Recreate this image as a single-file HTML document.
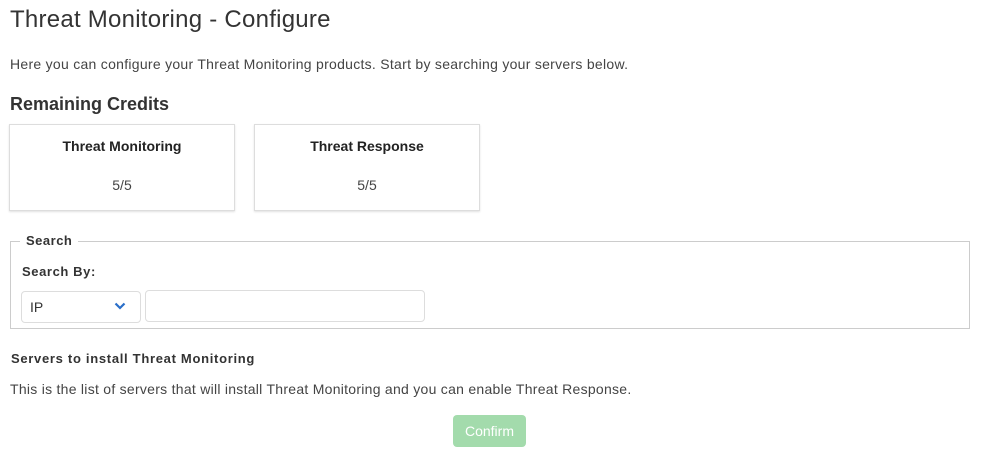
<!DOCTYPE html>
<html><head><style>
*{margin:0;padding:0;box-sizing:border-box}
body{width:1000px;height:458px;background:#fff;font-family:"Liberation Sans",sans-serif;color:#333;position:relative;overflow:hidden}
.a{position:absolute;white-space:nowrap}
.card{position:absolute;top:124px;width:226px;height:87px;border:1px solid #ddd;box-shadow:0 1px 2px rgba(0,0,0,.12);background:#fff}
.card .t{position:absolute;top:13px;left:0;right:0;text-align:center;font-weight:bold;font-size:14px;color:#222}
.card .v{position:absolute;top:52px;left:0;right:0;text-align:center;font-size:14px;color:#444}
</style></head><body>
<div class="a" style="left:10px;top:6px;font-size:24px;color:#333;letter-spacing:0.25px">Threat Monitoring - Configure</div>
<div class="a" style="left:10px;top:56px;font-size:14px;color:#444;letter-spacing:0.28px">Here you can configure your Threat Monitoring products. Start by searching your servers below.</div>
<div class="a" style="left:10px;top:94px;font-size:18px;font-weight:bold;color:#333">Remaining Credits</div>
<div class="card" style="left:9px"><div class="t">Threat Monitoring</div><div class="v">5/5</div></div>
<div class="card" style="left:254px"><div class="t">Threat Response</div><div class="v">5/5</div></div>
<div style="position:absolute;left:10px;top:241px;width:960px;height:88px;border:1px solid #ccc"></div>
<div class="a" style="left:20px;top:233px;padding:0 6px;background:#fff;font-size:13px;font-weight:bold;color:#333;letter-spacing:0.5px">Search</div>
<div class="a" style="left:22px;top:264px;font-size:13px;font-weight:bold;color:#333;letter-spacing:0.6px">Search By:</div>
<div style="position:absolute;left:21px;top:291px;width:120px;height:32px;border:1px solid #ddd;border-radius:4px"></div>
<div class="a" style="left:30px;top:299px;font-size:14px;color:#333">IP</div>
<svg style="position:absolute;left:114px;top:302px" width="12" height="8" viewBox="0 0 12 8"><path d="M1.5 1.5 L6 6 L10.5 1.5" fill="none" stroke="#2a6fc9" stroke-width="2.2"/></svg>
<div style="position:absolute;left:145px;top:290px;width:280px;height:32px;border:1px solid #ddd;border-radius:4px"></div>
<div class="a" style="left:11px;top:351px;font-size:13px;font-weight:bold;color:#333;letter-spacing:0.7px">Servers to install Threat Monitoring</div>
<div class="a" style="left:10px;top:381px;font-size:14px;color:#444;letter-spacing:0.27px">This is the list of servers that will install Threat Monitoring and you can enable Threat Response.</div>
<div class="a" style="left:453px;top:415px;width:73px;height:32px;background:#a3dbac;border-radius:4px;color:#fff;font-size:14px;text-align:center;line-height:32px">Confirm</div>
</body></html>
